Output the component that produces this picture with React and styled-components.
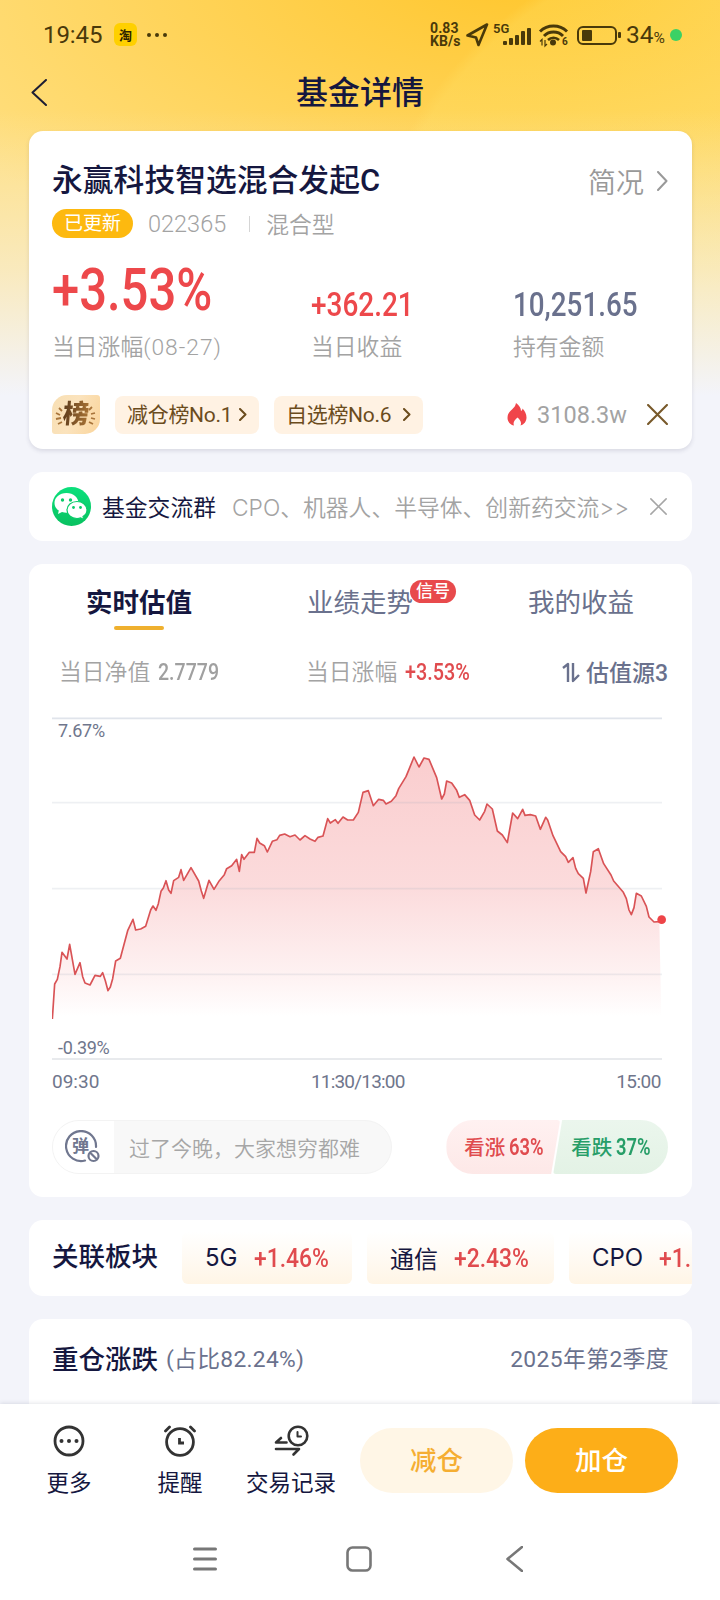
import React from 'react';
import styled, { createGlobalStyle } from 'styled-components';

const morning = [
  [37, 957], [44, 852], [52, 838], [60, 800], [66, 757], [81, 777], [89, 733], [105, 823], [120, 788], [128, 830],
  [135, 849], [150, 855], [165, 826], [181, 829], [188, 818], [196, 842], [204, 872], [211, 861], [218, 836],
  [227, 783], [241, 775], [263, 692], [279, 658], [287, 690], [302, 687], [317, 679], [332, 630], [339, 618],
  [348, 631], [355, 611], [363, 574], [370, 564], [378, 542], [386, 570], [393, 580], [401, 542], [416, 532],
  [423, 509], [431, 541], [453, 503], [476, 543], [484, 573], [491, 595], [507, 541], [522, 568], [538, 542],
  [553, 524], [560, 506], [575, 497], [590, 478], [598, 514], [605, 464], [612, 478], [628, 457], [643, 457],
  [651, 415], [659, 429], [673, 437], [682, 456], [697, 424], [711, 419], [719, 406], [734, 402], [750, 410],
  [765, 405], [780, 420], [795, 407], [810, 417], [825, 424], [834, 412], [849, 408], [863, 356], [871, 369],
  [886, 359], [894, 370], [909, 351], [923, 360],
];

const afternoon = [
  [10, 360], [25, 337], [39, 277], [55, 272], [70, 317], [86, 298], [100, 301], [108, 312], [124, 304], [138, 287],
  [146, 266], [168, 230], [177, 208], [192, 171], [207, 201], [222, 174], [237, 178], [260, 233], [275, 297],
  [283, 282], [290, 243], [305, 249], [320, 271], [328, 292], [344, 284], [359, 301], [374, 345], [389, 360],
  [404, 334], [411, 312], [427, 327], [442, 393], [457, 405], [472, 428], [488, 339], [503, 356], [518, 328],
  [525, 346], [541, 344], [557, 348], [571, 388], [587, 352], [593, 360], [609, 407], [632, 455], [647, 470],
  [655, 487], [669, 473], [677, 505], [685, 521], [700, 535], [708, 579], [722, 515], [730, 455], [745, 446],
  [761, 491], [783, 525], [791, 543], [820, 577], [829, 596], [837, 630], [844, 644], [852, 623], [859, 580],
  [874, 588], [889, 619], [897, 651], [912, 666], [928, 665],
];

// both sessions share one axis, three units per pixel
const points = [
  ...morning.map(([x, y]) => [x - 36, y]),
  ...afternoon.map(([x, y]) => [x + 894, y]),
];
const line = points.map((p) => p.join(',')).join(' ');

const sectors = [
  { name: '5G', change: '+1.46%', width: 170 },
  { name: '通信', change: '+2.43%', width: 187 },
  { name: 'CPO', change: '+1.', width: 180 },
];

const StatusIcons = () => (
  <svg width="152" height="26" viewBox="0 0 152 26" fill="none" stroke="#49390a">
    <path d="M1.5 13.5 21 2.5 12.5 23 10 15.5Z" strokeWidth="2.6" strokeLinejoin="round" />
    <g fill="#49390a" stroke="none">
      <rect x="37" y="19" width="4" height="4" rx="1" />
      <rect x="43" y="16" width="4" height="7" rx="1" />
      <rect x="49" y="13" width="4" height="10" rx="1" />
      <rect x="55" y="9" width="4" height="14" rx="1" />
      <rect x="61" y="6" width="4" height="17" rx="1" />
      <circle cx="87" cy="20.5" r="3" />
      <path d="M76 23.5v-6l-2 2M79 18v6l2-2" fill="none" stroke="#49390a" strokeWidth="1.2" />
    </g>
    <path d="M74 9.500a19.500 19.500 0 0 1 27 0" strokeWidth="3" />
    <path d="M78 14a13.500 13.500 0 0 1 19 0" strokeWidth="3" />
    <path d="M82 18a8 8 0 0 1 11 0" strokeWidth="2.6" />
    <rect x="112" y="5" width="38" height="17" rx="5" strokeWidth="2" />
    <rect x="116" y="8" width="10" height="11" rx="1" fill="#49390a" stroke="none" />
  </svg>
);

const Chevron = ({ w = 9, h = 18, color = '#999', stroke = 2, left }) => (
  <svg width={w} height={h} viewBox={`0 0 ${w} ${h}`} fill="none" stroke={color} strokeWidth={stroke} strokeLinecap="round" strokeLinejoin="round">
    {left
      ? <path d={`M${w - 1} 1 1.500 ${h / 2} ${w - 1} ${h - 1}`} />
      : <path d={`M1 1 ${w - 1.5} ${h / 2} 1 ${h - 1}`} />}
  </svg>
);

const Cross = ({ size, color, stroke }) => (
  <svg width={size} height={size} viewBox="0 0 20 20" stroke={color} strokeWidth={stroke} strokeLinecap="round">
    <path d="M1 1 19 19M19 1 1 19" />
  </svg>
);

const Flame = () => (
  <svg width="20" height="23" viewBox="0 0 20 23">
    <path d="M9 0c3 2 5 5 5 8 1-.6 1.500-1.500 1.500-2.500C18 8 19.500 11 19.500 14.500c0 4-2.500 7-6 8 1.500-3-.5-6-3-8-3 2.500-4.800 5-3.500 8-4-.8-6.500-4-6.500-7.500C.5 10 3 8.500 5 6.500 7 4.500 8.500 3 9 0Z" fill="#f0454a" />
  </svg>
);

const RankBadge = () => (
  <RankBox>
    <svg width="48" height="39" viewBox="0 0 48 39" fill="none" stroke="#a8743a" strokeWidth="1.800">
      <path d="M7 13l3 3M4 18l4 2M4 24l5-1M6 29l4-2M40 12l-3 3M43 18l-4 1M43 24l-4-1M41 29l-4-2" />
    </svg>
    <b>榜</b>
  </RankBox>
);

const WeChat = () => (
  <svg width="39" height="39" viewBox="0 0 39 39">
    <defs>
      <linearGradient id="wx" x1="0" y1="0" x2="0" y2="1">
        <stop offset="0" stopColor="#0be07c" />
        <stop offset="1" stopColor="#09c160" />
      </linearGradient>
    </defs>
    <circle cx="19.500" cy="19.500" r="19.500" fill="url(#wx)" />
    <path d="M14.500 6C7.500 6 2.500 10.500 2.500 16c0 3.200 1.600 5.800 4.300 7.600L6 27l4-2c1.500.4 3 .7 4.500.7 7 0 12-4.400 12-9.700S21.500 6 14.500 6Z" fill="#fff" />
    <path d="M25 14.500c-5.800 0-10 3.800-10 8.500s4.200 8.500 10 8.500c1.200 0 2.500-.2 3.600-.6l3.200 1.700-.8-3c2.500-1.600 4-3.900 4-6.600 0-4.700-4.200-8.500-10-8.500Z" fill="#fff" stroke="#0acb69" strokeWidth="1.200" />
    <g fill="#0acb69">
      <circle cx="10.500" cy="13" r="1.700" />
      <circle cx="18.500" cy="13" r="1.700" />
      <circle cx="21.500" cy="20.500" r="1.400" />
      <circle cx="28.500" cy="20.500" r="1.400" />
    </g>
  </svg>
);

const BarrageIcon = () => (
  <Barrage>
    <svg width="36" height="34" viewBox="0 0 36 34" fill="none" stroke="#70778f" strokeWidth="2.200">
      <path d="M20 30.500A15 15 0 1 1 31 17" strokeLinecap="round" />
      <circle cx="28.500" cy="26" r="5" />
      <path d="M25 22.500 32 29.500" />
    </svg>
    <b>弹</b>
  </Barrage>
);

const MoreIcon = () => (
  <svg width="32" height="32" viewBox="0 0 32 32" fill="none" stroke="#333" strokeWidth="2.800">
    <circle cx="16" cy="16" r="14" />
    <g fill="#333" stroke="none">
      <circle cx="8.500" cy="16" r="2" />
      <circle cx="16" cy="16" r="2" />
      <circle cx="23.500" cy="16" r="2" />
    </g>
  </svg>
);

const AlarmIcon = () => (
  <svg width="32" height="32" viewBox="0 0 32 32" fill="none" stroke="#333" strokeWidth="2.800" strokeLinecap="round">
    <circle cx="16" cy="17" r="13.400" />
    <path d="M1.500 6 5.500 2M30.500 6 26.500 2" />
    <path d="M15.500 13v5h4.500" strokeLinecap="butt" />
  </svg>
);

const TradeIcon = () => (
  <svg width="35" height="32" viewBox="0 0 35 32" fill="none" stroke="#333" strokeWidth="2.600" strokeLinecap="round" strokeLinejoin="round">
    <circle cx="24" cy="11" r="9.300" />
    <path d="M23.500 7v4.500H27" strokeWidth="2" />
    <path d="M12.500 17.500H2l5-4.500M2 24h23l-5.500 5.500" />
  </svg>
);

const Chart = () => (
  <svg width="616" height="360" viewBox="0 0 1848 1080">
    <defs>
      <linearGradient id="fill" gradientUnits="userSpaceOnUse" x1="0" y1="170" x2="0" y2="950">
        <stop offset="0" stopColor="#f6a5a7" stopOpacity=".55" />
        <stop offset=".5" stopColor="#f6a5a7" stopOpacity=".4" />
        <stop offset=".85" stopColor="#f6a5a7" stopOpacity=".14" />
        <stop offset="1" stopColor="#f6a5a7" stopOpacity="0" />
      </linearGradient>
    </defs>
    <polygon points={`${line} 1828,957 1,957`} fill="url(#fill)" />
    <g stroke="#9aa9b5" strokeOpacity=".17" strokeWidth="5">
      <path d="M0 308H1830M0 566H1830M0 823H1830" />
    </g>
    <path d="M0 55H1830" stroke="#e0e4eb" strokeWidth="5" />
    <path d="M0 1077H1830" stroke="#e0e3e7" strokeWidth="5" />
    <polyline points={line} fill="none" stroke="#d95356" strokeWidth="5" strokeLinejoin="round" />
    <circle cx="1829" cy="659" r="13" fill="#ee4448" />
  </svg>
);

export default function App() {
  return (
    <Page>
      <GlobalStyle />
      <StatusBar>
        <Clock>19:45</Clock>
        <AppTag>淘</AppTag>
        <Dots><i /><i /><i /></Dots>
        <Speed>0.83<br />KB/s</Speed>
        <Signals>
          <StatusIcons />
          <Network>5G</Network>
          <WifiBand>6</WifiBand>
        </Signals>
        <BatteryTip />
        <Battery>34<small>%</small></Battery>
        <GreenDot />
      </StatusBar>

      <Header>
        <Chevron w={16} h={27} color="#1d1d33" stroke={2} left />
        <h1>基金详情</h1>
      </Header>

      <Content>
        <FundCard>
          <TitleRow>
            <h2>永赢科技智选混合发起C</h2>
            <Profile>简况<Chevron w={11} h={20} /></Profile>
          </TitleRow>
          <Meta>
            <Updated>已更新</Updated>
            <Code>022365</Code>
            <Divider />
            <span>混合型</span>
          </Meta>
          <Stats>
            <Stat>
              <Figure $size={59} $x={0.83} $color="#ed484b">+3.53%</Figure>
              <Label>当日涨幅<em>(08-27)</em></Label>
            </Stat>
            <Stat>
              <Figure $size={32.5} $x={0.86} $color="#ed484b">+362.21</Figure>
              <Label>当日收益</Label>
            </Stat>
            <Stat>
              <Figure $size={32.5} $x={0.855} $color="#6a718d">10,251.65</Figure>
              <Label>持有金额</Label>
            </Stat>
          </Stats>
          <Ranks>
            <RankBadge />
            <RankChip $width={144}><span>减仓榜No.1</span><Chevron w={8} h={13} color="#6b4c1d" /></RankChip>
            <RankChip $width={149}><span>自选榜No.6</span><Chevron w={8} h={13} color="#6b4c1d" /></RankChip>
            <Heat><Flame />3108.3w</Heat>
            <Cross size={21} color="#78592a" stroke={2} />
          </Ranks>
        </FundCard>

        <GroupCard>
          <WeChat />
          <strong>基金交流群</strong>
          <p>CPO、机器人、半导体、创新药交流&gt;&gt;</p>
          <Cross size={17} color="#a6a6a6" stroke={1.8} />
        </GroupCard>

        <TrendCard>
          <Tabs>
            <Tab $active>实时估值</Tab>
            <Tab>业绩走势<SignalBadge>信号</SignalBadge></Tab>
            <Tab>我的收益</Tab>
          </Tabs>
          <Summary>
            <SummaryItem><span>当日净值</span><Figure $size={23} $x={0.85} $color="#a0a0a0">2.7779</Figure></SummaryItem>
            <SummaryItem><span>当日涨幅</span><Figure $size={23} $x={0.86} $color="#e04b4e">+3.53%</Figure></SummaryItem>
            <Source>
              <svg width="18" height="21" viewBox="0 0 18 21" fill="none" stroke="#6a718d" strokeWidth="2.400" strokeLinejoin="round">
                <path d="M1 6 6 2v18M11 1v18l6-6" />
              </svg>
              <span>估值源3</span>
            </Source>
          </Summary>
          <ChartArea>
            <Chart />
            <Limit $top={19}>7.67%</Limit>
            <Limit $top={336}>-0.39%</Limit>
          </ChartArea>
          <Axis><span>09:30</span><span>11:30/13:00</span><span>15:00</span></Axis>
          <VoteRow>
            <Comment>
              <BarrageIcon />
              <p>过了今晚，大家想穷都难</p>
            </Comment>
            <Vote $up><span>看涨</span><Figure $size={23} $x={0.8} $bold>63%</Figure></Vote>
            <Vote><span>看跌</span><Figure $size={23} $x={0.8} $bold>37%</Figure></Vote>
          </VoteRow>
        </TrendCard>

        <SectorCard>
          <h3>关联板块</h3>
          {sectors.map((s) => (
            <Sector key={s.name} $width={s.width}>
              <span>{s.name}</span>
              <Figure $size={26} $x={0.88} $color="#e04b4e">{s.change}</Figure>
            </Sector>
          ))}
        </SectorCard>

        <HoldingCard>
          <h3>重仓涨跌</h3>
          <span>(占比82.24%)</span>
          <Quarter>2025年第2季度</Quarter>
        </HoldingCard>
      </Content>

      <Bottom>
        <Actions>
          <Action $width={78}><MoreIcon />更多</Action>
          <Action $width={144}><AlarmIcon />提醒</Action>
          <Action $width={78}><TradeIcon />交易记录</Action>
          <Button>减仓</Button>
          <Button $primary>加仓</Button>
        </Actions>
        <NavBar>
          <svg width="26" height="26" viewBox="0 0 26 26" stroke="#777" strokeWidth="3" strokeLinecap="round">
            <path d="M2.500 3h21M2.500 13h21M2.500 23h21" />
          </svg>
          <svg width="26" height="26" viewBox="0 0 26 26" fill="none" stroke="#777" strokeWidth="2.600">
            <rect x="1.500" y="1.500" width="23" height="23" rx="5" />
          </svg>
          <Chevron w={17} h={26} color="#777" stroke={2.6} left />
        </NavBar>
      </Bottom>
    </Page>
  );
}

const GlobalStyle = createGlobalStyle`
  * {
    box-sizing: border-box;
  }

  body {
    margin: 0;
    background: #f3f4fa;
  }

  h1, h2, h3, p {
    margin: 0;
    font-weight: 500;
  }

  svg {
    display: block;
    flex: none;
  }
`;

const Page = styled.div`
  display: flex;
  flex-direction: column;
  width: 720px;
  height: 1600px;
  overflow: hidden;
  white-space: nowrap;
  font-family: Roboto, 'Noto Sans CJK SC', sans-serif;
  color: #15173f;
  background:
    linear-gradient(180deg, rgba(243, 244, 250, 0) 110px, rgba(243, 244, 250, 0.5) 270px, #f3f4fa 395px),
    radial-gradient(circle at 760px 330px, rgba(255, 232, 115, 0.22) 392px, transparent 404px),
    radial-gradient(ellipse 660px 330px at 520px -30px, #ffc62c, #ffdf80);
`;

const StatusBar = styled.div`
  display: flex;
  align-items: center;
  flex: none;
  height: 69px;
  padding-left: 43px;
  color: #49390a;
`;

const Clock = styled.span`
  width: 71px;
  font-size: 24px;
  letter-spacing: -0.1px;
`;

const AppTag = styled.span`
  display: flex;
  align-items: center;
  justify-content: center;
  width: 23px;
  height: 23px;
  border-radius: 6px;
  background: #ffd000;
  color: #2b2200;
  font-size: 13px;
  font-weight: 700;
`;

const Dots = styled.span`
  display: flex;
  gap: 4px;
  margin-left: 10px;

  i {
    width: 4px;
    height: 4px;
    border-radius: 50%;
    background: #49390a;
  }
`;

const Speed = styled.span`
  width: 36px;
  margin-left: 263px;
  font-size: 14px;
  font-weight: 700;
  line-height: 13px;
  letter-spacing: 0.1px;
`;

const Signals = styled.div`
  position: relative;
`;

const Network = styled.span`
  position: absolute;
  left: 27px;
  top: 0;
  font-size: 13px;
  font-weight: 600;
  line-height: 14px;
`;

const WifiBand = styled.span`
  position: absolute;
  left: 96px;
  top: 15px;
  font-size: 10px;
  font-weight: 700;
  line-height: 10px;
`;

const BatteryTip = styled.i`
  width: 3px;
  height: 6px;
  border-radius: 1px;
  background: #49390a;
`;

const Battery = styled.span`
  width: 47px;
  margin-left: 5px;
  font-size: 24.500px;

  small {
    font-size: 15.500px;
  }
`;

const GreenDot = styled.i`
  width: 12px;
  height: 12px;
  margin-left: -3px;
  border-radius: 50%;
  background: #3bd165;
`;

const Header = styled.header`
  display: flex;
  align-items: center;
  flex: none;
  height: 46px;
  padding-left: 31px;

  h1 {
    width: 626px;
    padding-top: 2px;
    text-align: center;
    font-size: 32px;
    line-height: 46px;
  }
`;

const Content = styled.main`
  display: flex;
  flex-direction: column;
  gap: 23px;
  flex: none;
  height: 1289px;
  padding: 16px 28px 0 29px;
  overflow: hidden;
`;

const Card = styled.section`
  flex: none;
  border-radius: 14px;
  background: #fff;
`;

const FundCard = styled(Card)`
  height: 318px;
  padding: 28px 24px 0 23px;
  box-shadow: 0 2px 4px rgba(60, 60, 90, 0.14);
`;

const TitleRow = styled.div`
  display: flex;
  align-items: center;
  justify-content: space-between;
  height: 44px;

  h2 {
    padding-bottom: 7px;
    font-size: 30.800px;
  }
`;

const Profile = styled.span`
  display: flex;
  align-items: center;
  gap: 13px;
  color: #999;
  font-size: 28px;
  font-weight: 350;
`;

const Meta = styled.div`
  display: flex;
  align-items: center;
  height: 41px;
  color: #a3a3a3;
  font-size: 22.800px;
  font-weight: 350;
`;

const Updated = styled.span`
  width: 81px;
  height: 29px;
  margin-right: 15px;
  border-radius: 15px;
  background: #fdb90f;
  color: #fff;
  font-size: 19px;
  font-weight: 400;
  line-height: 29px;
  text-align: center;
`;

const Code = styled.span`
  font-size: 23.500px;
`;

const Divider = styled.i`
  width: 1px;
  height: 16px;
  margin: 0 16px 0 23px;
  background: #d5d5d5;
`;

const Stats = styled.div`
  display: grid;
  grid-template-columns: 259px 202px 150px;
  height: 121px;
`;

const Stat = styled.div`
  display: flex;
  flex-direction: column;
  justify-content: flex-end;
`;

// condensed numerals
const Figure = styled.span`
  display: block;
  width: max-content;
  color: ${(p) => p.$color || 'inherit'};
  font-size: ${(p) => p.$size}px;
  font-weight: ${(p) => (p.$bold ? 600 : 500)};
  line-height: ${(p) => p.$size}px;
  transform: scaleX(${(p) => p.$x});
  transform-origin: left;

  ${Stat} & {
    padding-bottom: ${(p) => (p.$size > 50 ? 12 : 10)}px;
  }
`;

const Label = styled.span`
  height: 34px;
  color: #a3a3a3;
  font-size: 22.800px;
  font-weight: 350;
  line-height: 34px;

  em {
    font-style: normal;
    letter-spacing: 1px;
  }
`;

const Ranks = styled.div`
  display: flex;
  align-items: center;
  margin-top: 30px;
  height: 39px;
`;

const RankBox = styled.span`
  position: relative;
  width: 48px;
  height: 39px;
  margin-right: 15px;
  border-radius: 15px 3px 15px 3px;
  background: linear-gradient(110deg, #f8dfb3, #fbe3bd 45%, #fad49a);

  b {
    position: absolute;
    left: 11px;
    top: 4px;
    color: transparent;
    background: linear-gradient(90deg, #5f3d1c, #a87335);
    background-clip: text;
    font-size: 26px;
    font-weight: 900;
    line-height: 30px;
    transform: skewX(-5deg);
  }
`;

const RankChip = styled.span`
  display: flex;
  align-items: center;
  justify-content: space-between;
  width: ${(p) => p.$width}px;
  height: 38px;
  margin-right: 15px;
  padding: 0 12px;
  border-radius: 8px;
  background: #fff2e3;
  color: #6b4c1d;
  font-size: 21px;
  letter-spacing: -0.3px;

  span {
    padding-bottom: 3px;
  }
`;

const Heat = styled.span`
  display: flex;
  align-items: center;
  gap: 10px;
  margin-left: auto;
  margin-right: 20px;
  color: #a3a3a3;
  font-size: 23.500px;
`;

const GroupCard = styled(Card)`
  display: flex;
  align-items: center;
  height: 69px;
  padding: 0 25px 0 23px;

  strong {
    margin-left: 11px;
    font-size: 22.800px;
    font-weight: 400;
  }

  p {
    flex: 1;
    margin-left: 16px;
    color: #a3a3a3;
    font-family: Inter, 'Noto Sans CJK SC', sans-serif;
    font-size: 22.800px;
    font-weight: 350;
  }
`;

const TrendCard = styled(Card)`
  height: 633px;
`;

const Tabs = styled.div`
  display: grid;
  grid-template-columns: repeat(3, 1fr);
  height: 63px;
`;

const Tab = styled.div`
  position: relative;
  padding: 18px 1px 0 0;
  color: ${(p) => (p.$active ? '#15173f' : '#6a718d')};
  font-size: 26.500px;
  font-weight: ${(p) => (p.$active ? 600 : 400)};
  line-height: 42px;
  text-align: center;

  &::after {
    content: '';
    display: ${(p) => (p.$active ? 'block' : 'none')};
    width: 50px;
    height: 4px;
    margin: 2px auto 0;
    border-radius: 2px;
    background: #efb02e;
  }
`;

const SignalBadge = styled.span`
  position: absolute;
  left: 160px;
  top: 16px;
  width: 46px;
  height: 23px;
  border-radius: 12px;
  background: #e84a4c;
  color: #fff;
  font-size: 17px;
  font-weight: 500;
  line-height: 23px;
`;

const Summary = styled.div`
  display: grid;
  grid-template-columns: 247px 1fr auto;
  align-items: center;
  height: 60px;
  margin-top: 15px;
  padding: 0 24px 0 30px;
`;

const SummaryItem = styled.div`
  display: flex;
  align-items: center;
  gap: 8px;
  color: #a3a3a3;
  font-size: 22.800px;
  font-weight: 350;

  span:first-child {
    padding-bottom: 3px;
  }
`;

const Source = styled.div`
  display: flex;
  align-items: center;
  gap: 6px;
  color: #6a718d;
  font-size: 23px;
  font-weight: 500;

  span {
    padding-bottom: 3px;
  }
`;

const ChartArea = styled.div`
  position: relative;
  height: 360px;
  margin: -2px 0 0 23px;
`;

const Limit = styled.span`
  position: absolute;
  left: 6px;
  top: ${(p) => p.$top}px;
  color: #6f768c;
  font-size: 18px;
  letter-spacing: -0.3px;
  line-height: 24px;
`;

const Axis = styled.div`
  display: flex;
  justify-content: space-between;
  height: 44px;
  padding: 0 31px 0 23px;
  color: #6f768c;
  font-size: 19px;
  letter-spacing: -0.5px;
  line-height: 44px;

  span:first-child {
    letter-spacing: 0;
  }

  span:nth-child(2) {
    letter-spacing: -0.8px;
  }
`;

const VoteRow = styled.div`
  display: flex;
  height: 54px;
  margin: 16px 24px 0 23px;
`;

const Comment = styled.div`
  display: flex;
  align-items: center;
  width: 341px;
  margin-right: 54px;
  overflow: hidden;
  border: 1px solid #f3f3f3;
  border-radius: 27px;
  background: #f8f8f8;

  p {
    margin-left: 15px;
    color: #a6a6a6;
    font-size: 21px;
    font-weight: 350;
  }
`;

const Barrage = styled.div`
  position: relative;
  width: 61px;
  height: 52px;
  padding: 9px 0 0 12px;
  background: #fff;

  b {
    position: absolute;
    left: 19px;
    top: 15px;
    color: #70778f;
    font-size: 17px;
    line-height: 20px;
  }
`;

const Vote = styled.div`
  display: flex;
  align-items: center;
  gap: 4px;
  width: ${(p) => (p.$up ? 114 : 115)}px;
  margin-left: ${(p) => (p.$up ? 0 : -7)}px;
  padding-left: 18px;
  border-radius: ${(p) => (p.$up ? '27px 3px 3px 27px' : '3px 27px 27px 3px')};
  clip-path: ${(p) => (p.$up
    ? 'polygon(0 0, 100% 0, calc(100% - 9px) 100%, 0 100%)'
    : 'polygon(9px 0, 100% 0, 100% 100%, 0 100%)')};
  background: ${(p) => (p.$up ? 'linear-gradient(#fff1f1, #fde8e7)' : 'linear-gradient(#ebf6ed, #e3f2e5)')};
  color: ${(p) => (p.$up ? '#e04b4e' : '#279e68')};
  font-size: 20.500px;
  font-weight: 500;

  span:first-child {
    padding-bottom: 2px;
  }
`;

const SectorCard = styled(Card)`
  display: flex;
  align-items: center;
  height: 76px;
  padding-left: 23px;
  overflow: hidden;

  h3 {
    flex: none;
    width: 130px;
    padding-bottom: 7px;
    font-size: 26.500px;
  }
`;

const Sector = styled.div`
  display: flex;
  align-items: center;
  gap: 16px;
  flex: none;
  width: ${(p) => p.$width}px;
  height: 52px;
  margin-right: 15px;
  padding-left: 23px;
  border-radius: 6px;
  background: linear-gradient(#fff, #fff5e6);

  span:first-child {
    padding-bottom: 2px;
    font-family: Inter, 'Noto Sans CJK SC', sans-serif;
    font-size: 24px;
  }
`;

const HoldingCard = styled(Card)`
  display: flex;
  align-items: center;
  height: 120px;
  padding: 0 23px 43px;
  color: #6a718d;
  font-size: 22.800px;
  letter-spacing: 0.3px;

  h3 {
    margin-right: 8px;
    color: #15173f;
    font-size: 26.500px;
    letter-spacing: 0;
  }
`;

const Quarter = styled.span`
  margin-left: auto;
  letter-spacing: 0.4px;
`;

const Bottom = styled.footer`
  position: relative;
  flex: none;
  height: 196px;
  background: #fff;
  box-shadow: 0 -1px 4px rgba(40, 50, 80, 0.12);
`;

const Actions = styled.div`
  display: flex;
  padding: 21px 0 0 30px;
`;

const Action = styled.div`
  display: flex;
  flex-direction: column;
  align-items: center;
  gap: 9px;
  width: ${(p) => p.$width}px;
  font-size: 22.500px;
  line-height: 34px;
`;

const Button = styled.button`
  width: 153px;
  height: 65px;
  margin: 3px 0 0 ${(p) => (p.$primary ? 12 : 30)}px;
  padding: 0;
  border: 0;
  border-radius: 33px;
  background: ${(p) => (p.$primary ? '#fdae18' : '#fff6e6')};
  color: ${(p) => (p.$primary ? '#fff' : '#f5ae32')};
  font: 500 26.500px/64px Roboto, 'Noto Sans CJK SC', sans-serif;
`;

const NavBar = styled.nav`
  display: grid;
  grid-template-columns: 154px 160px 17px;
  margin: 46px 0 0 192px;
`;
